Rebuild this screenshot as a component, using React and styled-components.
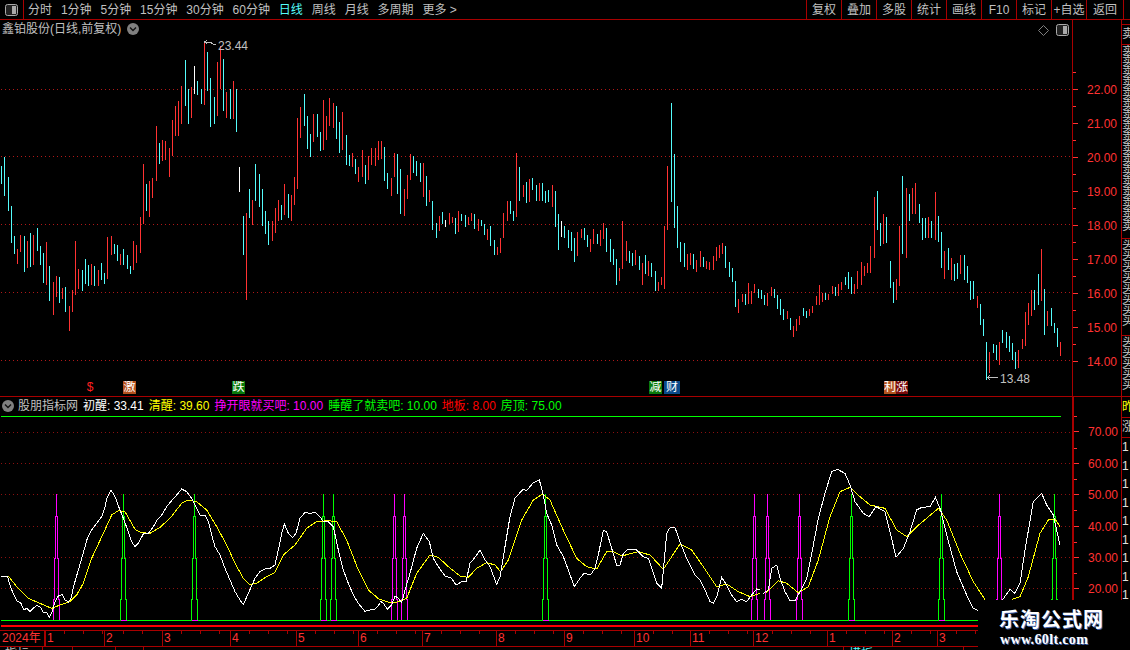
import React from "react";
import styled, { createGlobalStyle } from "styled-components";

const RED = "#ff3232";
const LINE = "#a80000";
const GRAY = "#c0c0c0";
const FONT = `"Liberation Sans", "Noto Sans CJK SC", sans-serif`;
const BAR_COLORS = { r: "#ff3232", c: "#54fcfc", w: "#ffffff" };

const GlobalStyle = createGlobalStyle`
  html, body {
    margin: 0;
    background: #000;
    overflow: hidden;
  }
`;

const Page = styled.div`
  position: relative;
  width: 1130px;
  height: 650px;
  overflow: hidden;
  background: #000;
  font: 12px/14px ${FONT};
  color: ${GRAY};
`;

const Toolbar = styled.div`
  display: flex;
  align-items: stretch;
  height: 20px;
  box-sizing: border-box;
  border-bottom: 1px solid ${LINE};
`;

const ToggleButton = styled.div`
  display: flex;
  align-items: center;
  justify-content: center;
  width: 23px;
  border-right: 1px solid ${LINE};
`;

const PeriodList = styled.div`
  display: flex;
  align-items: center;
  gap: 8.9px;
  padding-left: 4px;
`;

const Period = styled.span`
  color: ${(p) => (p.$active ? "#54fcfc" : GRAY)};
`;

const ToolList = styled.div`
  display: flex;
  margin-left: auto;
  margin-right: 6px;
`;

const Tool = styled.div`
  display: flex;
  align-items: center;
  justify-content: center;
  width: 35px;
  box-sizing: border-box;
  white-space: nowrap;
  border-left: 1px solid ${LINE};
  &:last-child {
    width: 38px;
    border-right: 1px solid ${LINE};
  }
`;

const MainPanel = styled.div`
  display: flex;
  height: 377px;
  box-sizing: border-box;
  border-bottom: 1px solid ${LINE};
`;

const IndicatorPanel = styled.div`
  display: flex;
  height: 233px;
`;

const Plot = styled.div`
  position: relative;
  flex: 0 0 1072px;
  width: 1072px;
`;

const ChartSvg = styled.svg`
  display: block;
  width: 1072px;
`;

const TitleRow = styled.div`
  display: flex;
  align-items: center;
  gap: 6px;
  height: 18px;
  padding: 0 3px 0 2px;
`;

const CornerIcons = styled.div`
  display: flex;
  align-items: center;
  gap: 7px;
  margin-left: auto;
  margin-top: 2px;
`;

const LegendRow = styled.div`
  display: flex;
  align-items: center;
  gap: 5px;
  height: 18px;
  padding-left: 2px;
  white-space: nowrap;
`;

const LegendName = styled.span`
  margin: 0 0 0 -1px;
`;

const LegendItem = styled.span`
  color: ${(p) => p.$color};
`;

const Axis = styled.div`
  flex: 0 0 50px;
  box-sizing: border-box;
  padding-top: ${(p) => p.$top}px;
  border-left: ${(p) => p.$rule}px solid ${LINE};
  border-right: 1px solid ${LINE};
`;

const AxisRow = styled.div`
  display: flex;
  align-items: center;
  height: ${(p) => p.$step}px;
  background: linear-gradient(${RED}, ${RED}) no-repeat left top / 3px 1px;
  color: ${RED};
`;

const Tick = styled.i`
  width: 5px;
  height: 1px;
  margin-right: 9px;
  background: ${RED};
`;

const AxisValue = styled.span`
  margin-top: 1px;
`;

const SideStrip = styled.div`
  flex: 1;
  overflow: hidden;
`;

const SideBlock = styled.div`
  height: ${(p) => p.$height}px;
  box-sizing: border-box;
  overflow: hidden;
  border-bottom: ${(p) => (p.$open ? 0 : 1)}px solid ${LINE};
  color: ${(p) => p.$color || "#c8c8c8"};
  line-height: ${(p) => p.$line || 11}px;
  white-space: pre;
`;

const TimeAxis = styled.div`
  display: flex;
  height: 17px;
  box-sizing: border-box;
  border-top: 1px solid ${LINE};
  border-bottom: 1px solid ${LINE};
  color: ${RED};
`;

const TimeCell = styled.div`
  flex: 0 0 ${(p) => p.$width}px;
  box-sizing: border-box;
  padding-left: ${(p) => (p.$boxed ? 1 : 1)}px;
  border-right: 1px solid ${(p) => (p.$boxed ? LINE : "transparent")};
  border-left: 1px solid ${(p) => (p.$boxed ? "transparent" : LINE)};
  line-height: 15px;
  background: ${(p) =>
    p.$boxed
      ? "none"
      : `repeating-linear-gradient(90deg, transparent 0 18px, ${LINE} 18px 19px) no-repeat left top / 100% 3px`};
`;

const StatusRow = styled.div`
  display: flex;
  height: 3px;
  overflow: hidden;
`;

const StatusCell = styled.div`
  flex: 0 0 ${(p) => p.$width}px;
  box-sizing: border-box;
  padding-left: 5px;
  border-right: 1px solid ${LINE};
  color: ${(p) => p.$color || GRAY};
  white-space: nowrap;
`;

const SignalBadge = styled.span`
  position: absolute;
  left: ${(p) => p.$x}px;
  top: 361px;
  width: ${(p) => p.$width}px;
  height: 13px;
  overflow: hidden;
  background: ${(p) => p.$bg};
  color: ${(p) => p.$color || "#fff"};
  line-height: 13px;
  text-align: center;
  white-space: nowrap;
`;

const Watermark = styled.div`
  position: absolute;
  left: 978px;
  top: 600px;
  width: 152px;
  height: 50px;
  padding-left: 21px;
  box-sizing: border-box;
  background: #000;
  clip-path: polygon(7px 0, 100% 0, 100% 100%, 0 100%, 0 10px, 7px 10px);
`;

const WatermarkTitle = styled.div`
  margin-top: 7px;
  color: #fff;
  font: bold 20px/24px "Noto Sans CJK SC", sans-serif;
  letter-spacing: 1px;
  text-shadow: 1px 1px 0 #3b5ea8;
`;

const WatermarkUrl = styled.div`
  margin-top: 1px;
  padding-left: 1px;
  color: #fff;
  font: bold 14px/16px "Liberation Serif", serif;
  letter-spacing: 0.35px;
  text-shadow: 1px 1px 0 #3b5ea8;
`;

// bars read off the chart as x, top, bottom, colour; each block has its own origin, 3 units to a pixel
const barBlock = (ox, oy, rows) =>
  rows.map(([x, top, bottom, c]) => ({
    x: ox + Math.floor(x / 3),
    y: oy + Math.round(top / 3),
    h: Math.max(1, Math.round((bottom - top) / 3)),
    c,
  }));

const BARS = [
  ...barBlock(0, 130, [
    [4, 108, 162, "c"], [13, 81, 198, "c"], [25, 141, 243, "c"], [34, 228, 339, "c"], [43, 318, 372, "c"],
    [52, 357, 402, "r"], [61, 315, 366, "r"], [73, 318, 426, "c"], [82, 333, 414, "r"], [91, 309, 411, "c"],
    [100, 315, 405, "r"], [112, 294, 363, "c"], [121, 348, 405, "c"], [130, 369, 459, "c"], [139, 336, 465, "r"],
    [148, 408, 513, "c"], [160, 456, 555, "r"], [169, 438, 501, "r"], [178, 441, 519, "c"], [187, 474, 507, "r"],
    [196, 471, 546, "c"], [208, 528, 603, "r"], [217, 480, 546, "r"], [226, 333, 495, "r"], [235, 417, 477, "r"],
    [247, 420, 483, "c"], [256, 387, 462, "c"], [265, 405, 468, "c"], [274, 402, 465, "r"], [283, 408, 468, "c"],
    [295, 420, 468, "r"], [304, 399, 450, "c"], [313, 429, 462, "c"], [322, 321, 447, "r"], [334, 318, 375, "r"],
    [343, 342, 372, "c"], [352, 345, 393, "c"], [361, 372, 405, "r"], [370, 357, 405, "c"], [382, 375, 417, "c"],
    [391, 408, 432, "c"], [400, 333, 420, "r"], [409, 345, 399, "r"], [421, 261, 369, "r"], [430, 102, 282, "r"],
    [439, 162, 243, "c"], [448, 153, 261, "r"], [457, 144, 204, "r"], [469, -12, 153, "r"], [478, 39, 102, "c"],
    [487, 30, 93, "r"], [496, 33, 90, "r"], [508, 54, 141, "r"], [517, -30, 78, "r"], [526, -72, 18, "r"],
    [535, -87, 18, "r"], [544, -132, -18, "r"], [556, -210, -72, "c"], [565, -123, -18, "c"], [574, -129, -36, "r"],
    [583, -192, -108, "w"], [592, -147, -105, "c"], [604, -123, -78, "c"], [613, -260, -75, "r"], [622, -234, -117, "c"],
    [631, -156, -9, "c"], [643, -99, -18, "c"], [652, -204, -42, "r"], [661, -252, -123, "r"], [670, -213, -57, "c"],
    [679, -114, -36, "r"], [691, -123, -33, "c"], [700, -147, -33, "r"], [709, -123, 6, "c"],
    [718, 111, 186, "w"], [730, 258, 375, "c"], [739, 249, 510, "r"], [748, 177, 264, "c"], [757, 210, 285, "r"],
    [766, 102, 213, "c"], [778, 132, 231, "c"], [787, 177, 288, "c"], [796, 243, 312, "c"], [805, 273, 345, "c"],
    [817, 273, 333, "r"], [826, 234, 309, "r"], [835, 210, 273, "r"], [844, 225, 270, "c"], [853, 162, 255, "r"],
    [865, 192, 264, "c"], [874, 195, 273, "r"], [883, 141, 225, "r"], [892, -36, 177, "r"], [901, -69, 24, "r"],
    [913, -108, -12, "c"], [922, -42, 57, "c"], [931, 12, 81, "c"], [940, -48, 36, "r"], [952, -48, 21, "c"],
    [961, 6, 63, "c"], [970, -90, 60, "r"], [979, -42, 30, "r"], [988, -96, -12, "r"], [1000, -81, -6, "r"],
    [1009, -72, 27, "c"], [1018, -24, 69, "c"],
  ]),
  ...barBlock(340, 90, [
    [7, 66, 180, "r"], [19, 135, 225, "c"], [28, 195, 228, "c"], [37, 189, 231, "r"], [46, 207, 252, "c"],
    [55, 231, 276, "r"], [67, 180, 261, "r"], [76, 225, 282, "c"], [85, 198, 270, "r"], [94, 174, 225, "r"],
    [106, 174, 228, "r"], [115, 153, 210, "r"], [124, 153, 207, "r"], [133, 171, 273, "c"], [142, 249, 297, "c"],
    [154, 264, 318, "r"], [163, 189, 261, "r"], [172, 192, 312, "c"], [181, 237, 372, "c"], [193, 297, 378, "r"],
    [202, 255, 327, "r"], [211, 192, 270, "r"], [220, 198, 249, "c"], [229, 213, 258, "c"], [241, 219, 276, "c"],
    [250, 219, 321, "r"], [259, 258, 348, "c"], [268, 300, 336, "r"], [277, 333, 420, "c"], [289, 399, 444, "c"],
    [298, 378, 423, "r"], [307, 366, 402, "c"], [316, 390, 411, "w"], [328, 369, 402, "r"], [337, 381, 399, "r"],
    [346, 384, 432, "c"], [355, 363, 426, "r"], [364, 372, 393, "c"], [376, 375, 411, "c"], [385, 381, 405, "r"],
    [394, 369, 393, "r"], [403, 372, 417, "c"], [415, 387, 423, "r"], [424, 390, 408, "c"], [433, 402, 435, "c"],
    [442, 417, 450, "r"], [451, 408, 468, "c"], [463, 450, 495, "c"], [472, 471, 495, "r"], [481, 444, 489, "r"],
    [490, 369, 444, "r"], [502, 333, 393, "r"], [511, 333, 372, "c"], [520, 363, 393, "c"], [529, 189, 381, "r"],
    [538, 231, 333, "c"], [550, 285, 321, "r"], [559, 276, 339, "c"], [568, 267, 336, "r"], [577, 264, 300, "c"],
    [589, 285, 333, "c"], [598, 279, 333, "r"], [607, 279, 333, "c"], [616, 303, 339, "c"], [625, 300, 336, "c"],
    [637, 285, 351, "r"], [646, 303, 411, "c"], [655, 372, 480, "c"], [664, 393, 441, "w"], [673, 408, 444, "c"],
    [685, 420, 474, "c"], [694, 426, 483, "c"], [703, 444, 516, "c"], [712, 426, 498, "r"], [724, 417, 444, "r"],
    [733, 414, 450, "c"], [742, 435, 471, "c"], [751, 447, 486, "r"], [760, 417, 462, "r"], [772, 432, 462, "c"],
    [781, 420, 468, "r"], [790, 399, 447, "r"], [799, 414, 486, "c"], [811, 447, 516, "c"], [820, 477, 525, "c"],
    [829, 507, 585, "c"], [838, 534, 573, "r"], [847, 393, 537, "r"], [859, 453, 513, "r"], [868, 483, 519, "c"],
    [877, 489, 528, "c"], [886, 480, 525, "r"], [898, 498, 540, "c"], [907, 519, 585, "r"], [916, 495, 552, "c"],
    [925, 513, 558, "r"], [934, 519, 561, "c"], [946, 543, 603, "c"], [955, 576, 603, "r"], [964, 561, 585, "r"],
    [973, 408, 597, "r"], [982, 228, 420, "r"], [994, 39, 336, "c"], [1003, 192, 414, "c"], [1012, 348, 474, "c"],
    [1021, 456, 516, "c"], [1033, 459, 531, "c"], [1042, 492, 540, "r"], [1051, 489, 525, "r"], [1060, 492, 537, "c"],
    [1069, 510, 546, "r"], [1081, 483, 531, "r"], [1090, 501, 531, "c"], [1099, 513, 537, "r"], [1108, 516, 540, "r"],
    [1120, 498, 540, "r"], [1129, 471, 513, "r"], [1138, 465, 504, "r"],
  ]),
  ...barBlock(720, 150, [
    [7, 279, 312, "r"], [16, 288, 354, "c"], [28, 336, 381, "c"], [37, 354, 396, "c"], [46, 393, 471, "c"],
    [55, 447, 489, "r"], [67, 432, 456, "r"], [76, 432, 465, "c"], [85, 399, 462, "r"], [94, 423, 462, "r"],
    [103, 402, 429, "r"], [115, 417, 444, "c"], [124, 420, 447, "c"], [133, 435, 465, "c"], [142, 429, 468, "r"],
    [154, 411, 438, "r"], [163, 417, 444, "c"], [172, 435, 477, "c"], [181, 447, 495, "c"], [190, 477, 510, "c"],
    [202, 483, 507, "r"], [211, 504, 540, "c"], [220, 528, 561, "r"], [229, 507, 543, "r"], [238, 498, 525, "r"],
    [250, 474, 498, "c"], [259, 483, 504, "c"], [268, 477, 498, "r"], [277, 468, 489, "r"], [289, 438, 465, "r"],
    [298, 405, 465, "r"], [307, 429, 456, "r"], [316, 429, 450, "c"], [325, 432, 450, "r"], [337, 408, 432, "r"],
    [346, 411, 438, "c"], [355, 402, 438, "r"], [364, 396, 420, "r"], [376, 381, 405, "c"], [385, 366, 417, "c"],
    [394, 381, 432, "c"], [403, 402, 432, "r"], [412, 363, 417, "r"], [424, 336, 405, "r"], [433, 348, 378, "r"],
    [442, 339, 369, "r"], [451, 288, 369, "r"], [463, 141, 324, "r"], [472, 123, 240, "c"], [481, 219, 288, "c"],
    [490, 192, 282, "r"], [499, 201, 279, "c"], [511, 333, 414, "c"], [520, 396, 459, "c"], [529, 387, 450, "r"],
    [538, 228, 408, "r"], [547, 78, 312, "c"], [559, 114, 324, "r"], [568, 132, 213, "c"], [577, 114, 192, "r"],
    [586, 99, 192, "r"], [598, 162, 219, "c"], [607, 204, 270, "c"], [616, 204, 264, "c"], [625, 201, 264, "r"],
    [634, 213, 264, "c"], [646, 126, 270, "r"], [655, 198, 276, "c"], [664, 246, 354, "c"], [673, 303, 387, "r"],
    [685, 294, 360, "c"], [694, 324, 390, "r"], [703, 342, 393, "c"], [712, 339, 387, "c"], [721, 315, 372, "r"],
    [733, 315, 390, "c"], [742, 348, 399, "c"], [751, 393, 450, "c"], [760, 393, 447, "c"], [772, 438, 474, "r"],
    [781, 462, 525, "c"], [790, 507, 558, "c"], [799, 576, 690, "c"], [808, 606, 668, "r"], [820, 582, 609, "c"],
    [829, 585, 630, "c"], [838, 576, 645, "r"], [847, 540, 579, "c"], [859, 546, 594, "c"], [868, 558, 606, "c"],
    [877, 579, 630, "c"], [886, 606, 657, "c"], [895, 600, 654, "r"], [907, 567, 597, "r"], [916, 486, 588, "r"],
    [925, 459, 525, "r"], [934, 420, 498, "r"], [943, 420, 480, "c"], [955, 372, 465, "c"], [964, 297, 453, "r"],
    [973, 417, 555, "c"], [982, 483, 528, "r"], [994, 474, 528, "c"], [1003, 519, 549, "c"], [1012, 534, 591, "c"],
    [1021, 576, 618, "r"],
  ]),
];

const trace = (ox, oy, flat) => {
  const out = [];
  for (let i = 0; i < flat.length; i += 2) {
    out.push(`${ox + flat[i] / 3},${oy + flat[i + 1] / 3}`);
  }
  return out.join(" ");
};

const WHITE_LINE = [
  trace(0, 470, [3,318,22,318,30,345,40,372,50,392,62,398,72,420,80,415,90,424,100,415,110,406,122,412,130,427,140,428,148,442,157,425,165,395,175,378,187,373,195,390,205,396,213,385,222,345,235,300,248,255,262,205,275,180,290,160,305,140,315,110,320,85,333,60,345,80,358,115,372,150,385,185,395,215,405,230,415,220,430,192,445,190,460,170,470,152,485,135,500,110,515,92,530,75,545,57,560,65,575,85,590,115,600,135,615,135,625,155,635,195,645,230,660,255,675,295,690,330,705,365,720,390,730,404,745,370,765,325,780,305,795,297,810,295,825,285,835,240,845,190,853,162,865,190,878,202,888,190,900,145,915,127,930,130,945,127,960,140,970,155,985,155,1000,170,1015,240,1030,300,1045,340,1060,375,1075,400,1095,424,1110,420,1125,418,1140,400]),
  trace(380, 470, [0,393,10,400,22,417,35,405,45,378,55,385,65,398,78,350,90,310,110,235,130,190,148,215,160,265,175,290,195,318,215,325,228,345,245,335,258,335,270,280,285,262,300,240,315,270,330,290,350,343,360,320,375,230,390,140,405,85,420,68,430,58,440,62,460,38,478,30,490,75,500,130,515,165,530,225,550,260,565,300,583,350,600,325,612,310,632,314,645,295,655,255,670,180,680,185,695,235,710,285,720,285,730,250,745,237,770,240,790,260,805,265,820,310,830,340,845,355,860,190,870,173,885,173,900,215,920,265,945,315,960,330,975,360,990,395,1000,400,1012,375,1025,322,1040,345,1055,375,1070,395,1085,388,1100,395,1115,375,1130,357,1140,358]),
  trace(750, 450, [40,430,55,420,65,355,80,345,90,385,105,425,120,452,135,452,150,425,170,385,190,285,205,205,225,130,245,65,262,58,285,70,300,105,315,155,340,190,358,200,378,170,405,185,420,245,438,322,460,295,480,245,500,180,515,172,540,170,556,142,572,180,590,255,620,365,650,435,670,475,684,482]),
  trace(750, 450, [757,450,780,418,795,430,810,400,825,300,850,155,875,130,890,165,910,195,930,285]),
];

const YELLOW_LINE = [
  trace(0, 470, [3,318,25,318,50,350,85,385,120,400,155,415,180,405,210,395,230,375,250,340,275,265,310,190,335,135,355,122,375,125,405,178,425,188,450,190,480,172,510,145,545,100,565,90,590,95,620,120,650,170,680,225,705,280,730,325,750,344,770,340,800,320,825,307,850,255,885,225,920,175,950,155,985,152,1010,155,1040,210,1075,300,1105,360,1140,390]),
  trace(380, 470, [0,388,30,398,60,395,80,385,110,310,150,255,175,262,205,290,240,318,265,322,290,295,320,278,345,285,362,305,385,270,425,150,460,90,488,72,510,90,545,170,590,265,620,290,650,297,680,245,700,245,725,258,775,245,810,255,850,298,900,222,935,240,970,290,1010,350,1040,342,1075,365,1110,380,1140,370]),
  trace(750, 450, [50,428,85,392,110,400,145,428,175,410,205,330,240,200,270,125,300,112,330,140,360,165,405,175,440,240,470,260,500,230,565,175,590,210,630,310,670,395,705,449]),
  trace(750, 450, [787,448,810,440,835,380,870,250,895,210,915,207,930,230]),
];

const SIGNALS = [
  { x: 56, c: "#ff00ff" }, { x: 123, c: "#00ff00" }, { x: 194, c: "#00ff00" }, { x: 323, c: "#00ff00" },
  { x: 333, c: "#00ff00" }, { x: 394, c: "#ff00ff" }, { x: 404, c: "#ff00ff" }, { x: 545, c: "#00ff00" },
  { x: 754, c: "#ff00ff" }, { x: 767, c: "#ff00ff" }, { x: 799, c: "#ff00ff" }, { x: 851, c: "#00ff00" },
  { x: 941, c: "#00ff00" }, { x: 999, c: "#ff00ff" }, { x: 1054, c: "#00ff00" },
];

const PERIODS = ["分时", "1分钟", "5分钟", "15分钟", "30分钟", "60分钟", "日线", "周线", "月线", "多周期", "更多 >"];
const TOOLS = ["复权", "叠加", "多股", "统计", "画线", "F10", "标记", "+自选", "返回"];
const PRICES = ["22.00", "21.00", "20.00", "19.00", "18.00", "17.00", "16.00", "15.00", "14.00"];
const LEVELS = ["70.00", "60.00", "50.00", "40.00", "30.00", "20.00"];
const LEGEND = [
  ["初醒: 33.41", "#ffffff"],
  ["清醒: 39.60", "#ffff00"],
  ["挣开眼就买吧: 10.00", "#ff00ff"],
  ["睡醒了就卖吧: 10.00", "#00ff00"],
  ["地板: 8.00", "#ff0000"],
  ["房顶: 75.00", "#00ff00"],
];
const MONTHS = [
  ["2024年", 45, true], ["1", 59], ["2", 58], ["3", 68], ["4", 66], ["5", 62], ["6", 64], ["7", 74],
  ["8", 68], ["9", 70], ["10", 56], ["11", 63], ["12", 74], ["1", 65], ["2", 45], ["3", 41],
];

const PanelToggle = () => (
  <svg width="13" height="12" viewBox="0 0 13 12">
    <rect x="0.5" y="0.5" width="12" height="11" rx="2" fill="#222" stroke="#aaa" />
    <rect x="7" y="2" width="4" height="8" fill="#aaa" />
  </svg>
);

const DropCircle = () => (
  <svg width="12" height="12" viewBox="0 0 12 12">
    <circle cx="6" cy="6" r="6" fill="#808080" />
    <path d="M3 4.5 6 7.5 9 4.5" fill="none" stroke="#111" strokeWidth="1.4" />
  </svg>
);

const Diamond = () => (
  <svg width="11" height="11" viewBox="0 0 11 11">
    <path d="M5.5.5 10.5 5.5 5.5 10.5.5 5.5Z" fill="none" stroke="#808080" />
  </svg>
);

const Dotted = ({ y, color, to = 1072 }) => (
  <line x1="1" x2={to} y1={y + 0.5} y2={y + 0.5} stroke={color} strokeDasharray="1 3" />
);

const PriceChart = () => (
  <ChartSvg height="358" viewBox="0 38 1072 358" shapeRendering="crispEdges">
    {[89, 156, 224, 292, 360].map((y) => (
      <Dotted key={y} y={y} color="#b01818" />
    ))}
    {BARS.map((b, i) => (
      <rect key={i} x={b.x} y={b.y} width="1" height={b.h} fill={BAR_COLORS[b.c]} />
    ))}
    <path d="M207 40 204.500 42 207 44M204.500 42H210L213 44H216" fill="none" stroke={GRAY} />
    <text x="218" y="50" fill={GRAY} fontSize="12" fontFamily="Liberation Sans">23.44</text>
    <path d="M990 375 987.500 377.500 990 380M987.500 377.500H998" fill="none" stroke={GRAY} />
    <text x="1000" y="383" fill={GRAY} fontSize="12" fontFamily="Liberation Sans">13.48</text>
  </ChartSvg>
);

const IndicatorChart = () => (
  <ChartSvg height="215" viewBox="0 415 1072 215" shapeRendering="crispEdges">
    <rect x="1" y="416" width="1060" height="1" fill="#00ff00" />
    {[432, 463, 494, 526, 557, 588].map((y) => (
      <Dotted key={y} y={y} color="#8c1010" />
    ))}
    {SIGNALS.map(({ x, c }) => (
      <path
        key={x}
        d={`M${x - 2.5} 620V599H${x - 1.5}V558H${x - 0.5}V516H${x + 0.5}V494M${x + 3.5} 620V599H${x + 2.5}V558H${x + 1.5}V516H${x + 0.5}`}
        fill="none"
        stroke={c}
      />
    ))}
    {YELLOW_LINE.map((points, i) => (
      <polyline key={i} points={points} fill="none" stroke="#ffff00" />
    ))}
    {WHITE_LINE.map((points, i) => (
      <polyline key={i} points={points} fill="none" stroke="#ffffff" />
    ))}
    <rect x="1" y="620" width="1071" height="1" fill="#00ff00" />
    {SIGNALS.filter((s) => s.c === "#00ff00").map(({ x }) => (
      <rect key={x} x={x - 2} y="620" width="6" height="1" fill="#ff00ff" />
    ))}
    <rect x="1" y="625" width="1071" height="2" fill="#ff0000" />
  </ChartSvg>
);

const repeat = (glyph, n) => Array(n).fill(glyph).join("\n");

export default function App() {
  return (
    <Page>
      <GlobalStyle />
      <Toolbar>
        <ToggleButton>
          <PanelToggle />
        </ToggleButton>
        <PeriodList>
          {PERIODS.map((name) => (
            <Period key={name} $active={name === "日线"}>{name}</Period>
          ))}
        </PeriodList>
        <ToolList>
          {TOOLS.map((name) => (
            <Tool key={name}>{name}</Tool>
          ))}
        </ToolList>
      </Toolbar>

      <MainPanel>
        <Plot>
          <TitleRow>
            <span>鑫铂股份(日线,前复权)</span>
            <DropCircle />
            <CornerIcons>
              <Diamond />
              <PanelToggle />
            </CornerIcons>
          </TitleRow>
          <PriceChart />
          <SignalBadge $x={84} $width={12} $bg="transparent" $color="#ff2020">$</SignalBadge>
          <SignalBadge $x={123} $width={13} $bg="#b4501e">激</SignalBadge>
          <SignalBadge $x={232} $width={13} $bg="#0a7a0a">跌</SignalBadge>
          <SignalBadge $x={649} $width={13} $bg="#0a7a0a">减</SignalBadge>
          <SignalBadge $x={664} $width={16} $bg="#0a4a8a">财</SignalBadge>
          <SignalBadge $x={884} $width={12} $bg="#b4541e">利</SignalBadge>
          <SignalBadge $x={896} $width={12} $bg="#7a0a0a">涨</SignalBadge>
        </Plot>
        <Axis $top={52} $rule={1}>
          {PRICES.map((v) => (
            <AxisRow key={v} $step={34}>
              <Tick />
              <AxisValue>{v}</AxisValue>
            </AxisRow>
          ))}
        </Axis>
        <SideStrip>
          <SideBlock $height={5} />
          <SideBlock $height={20} $line={19}>卖</SideBlock>
          <SideBlock $height={194}>{repeat("卖", 17)}</SideBlock>
          <SideBlock $height={97}>{repeat("买", 8)}</SideBlock>
          <SideBlock $height={60} $open>{repeat("买", 5)}</SideBlock>
        </SideStrip>
      </MainPanel>

      <IndicatorPanel>
        <Plot>
          <LegendRow>
            <DropCircle />
            <LegendName>股朋指标网</LegendName>
            {LEGEND.map(([text, color]) => (
              <LegendItem key={text} $color={color}>{text}</LegendItem>
            ))}
          </LegendRow>
          <IndicatorChart />
        </Plot>
        <Axis $top={19.3} $rule={2}>
          {LEVELS.map((v) => (
            <AxisRow key={v} $step={31.4}>
              <Tick />
              <AxisValue>{v}</AxisValue>
            </AxisRow>
          ))}
        </Axis>
        <SideStrip>
          <SideBlock $height={21} $color="#ffff00" $line={21}>昨</SideBlock>
          <SideBlock $height={20} $line={19}>涨</SideBlock>
          <SideBlock $height={190} $color="#e0e0e0" $line={18.5} $open>{repeat("1", 9)}</SideBlock>
        </SideStrip>
      </IndicatorPanel>

      <TimeAxis>
        {MONTHS.map(([label, width, boxed], i) => (
          <TimeCell key={i} $width={width} $boxed={boxed}>{label}</TimeCell>
        ))}
      </TimeAxis>
      <StatusRow>
        <StatusCell $width={43}>指标</StatusCell>
        <StatusCell $width={30} />
        <StatusCell $width={43} />
        <StatusCell $width={28} />
        <StatusCell $width={700} />
        <StatusCell $width={120} $color="#54fcfc">模板</StatusCell>
      </StatusRow>

      <Watermark>
        <WatermarkTitle>乐淘公式网</WatermarkTitle>
        <WatermarkUrl>www.60lt.com</WatermarkUrl>
      </Watermark>
    </Page>
  );
}
